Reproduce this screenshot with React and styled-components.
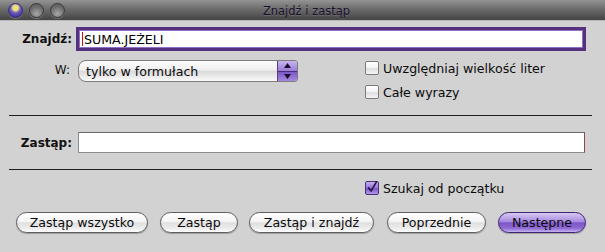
import React from "react";
import styled, { createGlobalStyle } from "styled-components";

const Global = createGlobalStyle`
  html, body { margin: 0; padding: 0; background: #d2d2d2; }
  body { font-family: "DejaVu Sans", "Liberation Sans", sans-serif; font-size: 12.6px; color: #111; }
  * { box-sizing: border-box; }
`;

const Window = styled.div`
  width: 605px;
  height: 252px;
  background: #d2d2d2;
  display: flex;
  flex-direction: column;
  overflow: hidden;
`;

const TitleBar = styled.div`
  height: 21px;
  flex: none;
  display: grid;
  grid-template-columns: 1fr auto 1fr;
  align-items: center;
  background: linear-gradient(#939393 0%, #6c6c6c 45%, #444 100%);
  border-bottom: 1px solid #b8b8b8;
  padding-left: 8px;
`;

const Lights = styled.div`
  display: flex;
  gap: 6px;
  align-items: center;
`;

const Light = styled.span`
  width: 15px;
  height: 15px;
  border-radius: 50%;
  border: 1px solid ${p => (p.$close ? "#3a2c7a" : "#3a3a3a")};
  background: ${p =>
    p.$close
      ? "radial-gradient(circle at 50% 30%, #f0e27a 0 22%, #6c5cc0 45%, #2d2380 100%)"
      : "radial-gradient(circle at 50% 75%, #a8a8a8 0%, #707070 55%, #555 100%)"};
  box-shadow: 0 1px 0 rgba(255,255,255,0.25);
`;

const Title = styled.div`
  font-size: 11.5px;
  color: #1b1030;
  text-shadow: 0 1px 0 rgba(255,255,255,0.15);
  padding-top: 1px;
`;

const Body = styled.div`
  display: flex;
  flex-direction: column;
`;

const Row = styled.div`
  display: flex;
  align-items: ${p => p.$align || "center"};
  margin-top: ${p => p.$mt || 0}px;
`;

const Label = styled.div`
  width: 72px;
  flex: none;
  text-align: right;
  font-size: 12px;
  font-weight: ${p => (p.$bold ? 700 : 400)};
  padding-right: ${p => p.$pr || 0}px;
  margin-top: ${p => p.$mt || 0}px;
`;

const FocusField = styled.div`
  margin-left: 4px;
  width: 510px;
  height: 24px;
  border: 3px solid #54307f;
  box-shadow: inset 0 0 0 1px #8e6fc4;
  background: #fff;
  display: flex;
  align-items: center;
  padding-left: 3px;
  color: #000;
`;

const Caret = styled.span`
  width: 1px;
  height: 14px;
  background: #d01010;
  margin-right: 1px;
`;

const TextField = styled.div`
  margin-left: 6px;
  width: 507px;
  height: 21px;
  background: #fff;
  border: 1px solid #8c8c8c;
  border-top-color: #6a6a6a;
  border-right-color: #8a4a4a;
`;

const Select = styled.div`
  margin-left: 6px;
  width: 220px;
  height: 22px;
  display: flex;
  border: 1px solid #7c7c7c;
  border-radius: 8px 3px 3px 8px;
  overflow: hidden;
  background: linear-gradient(#fdfdfd 0%, #efefef 45%, #dadada 52%, #ececec 80%, #fafafa 100%);
`;

const SelectText = styled.div`
  flex: 1;
  display: flex;
  align-items: center;
  padding-left: 7px;
  color: #0c0c0c;
`;

const Stepper = styled.div`
  width: 20px;
  display: flex;
  flex-direction: column;
  border-left: 1px solid #5a3d8a;
`;

const StepHalf = styled.div`
  flex: 1;
  display: flex;
  align-items: center;
  justify-content: center;
  background: ${p =>
    p.$up
      ? "linear-gradient(#c8b5ee, #9a7bd6)"
      : "linear-gradient(#7c56c6, #a68ae0)"};
  border-top: ${p => (p.$up ? "none" : "1px solid #4b2c7e")};
`;

const Options = styled.div`
  margin-left: ${p => p.$ml}px;
  margin-top: ${p => p.$mt || 0}px;
  display: flex;
  flex-direction: column;
  gap: 10px;
`;

const CheckRow = styled.label`
  display: flex;
  align-items: center;
  gap: 4px;
  color: #0a0a0a;
  height: 14px;
`;

const Box = styled.span`
  width: 14px;
  height: 14px;
  flex: none;
  border: 1px solid ${p => (p.$checked ? "#4a2f78" : "#7a7a7a")};
  border-radius: 2px;
  background: ${p =>
    p.$checked
      ? "linear-gradient(#c3b0ec 0%, #9676d8 50%, #7a54c6 55%, #b39be6 100%)"
      : "linear-gradient(#ffffff 0%, #f2f2f2 50%, #dedede 55%, #f6f6f6 100%)"};
  display: flex;
  align-items: center;
  justify-content: center;
  overflow: visible;
`;

const Separator = styled.div`
  height: 1px;
  background: #1e1e1e;
  margin: ${p => p.$mt || 0}px 13px 0 9px;
`;

const Buttons = styled.div`
  display: flex;
  margin-top: 17px;
  padding-left: 16px;
`;

const Button = styled.button`
  width: ${p => p.$w}px;
  margin-left: ${p => p.$ml || 0}px;
  height: 21px;
  border-radius: 11px;
  border: 1px solid ${p => (p.$primary ? "#3d2470" : "#5e5e5e")};
  font-family: "DejaVu Sans", "Liberation Sans", sans-serif;
  font-size: 12.6px;
  color: #0b0b0b;
  padding: 0;
  background: ${p =>
    p.$primary
      ? "linear-gradient(#d6c8f2 0%, #a88be0 45%, #7c56c8 52%, #8e6ad2 80%, #c5b2f0 100%)"
      : "linear-gradient(#ffffff 0%, #f4f4f4 45%, #e0e0e0 52%, #ececec 80%, #ffffff 100%)"};
  box-shadow: 0 1px 1px rgba(0,0,0,0.25);
`;

const buttons = [
  { t: "Zastąp wszystko", w: 132, ml: 0 },
  { t: "Zastąp", w: 78, ml: 12 },
  { t: "Zastąp i znajdź", w: 125, ml: 11 },
  { t: "Poprzednie", w: 99, ml: 13 },
  { t: "Następne", w: 88, ml: 12, primary: true },
];

const Check = () => (
  <svg width="14" height="16" viewBox="0 0 14 16" style={{ marginTop: -3 }}>
    <path d="M2.5 8.5 L6 12.5 L12.5 1.5" fill="none" stroke="#2a1450" strokeWidth="2" />
  </svg>
);

const Arrow = ({ up }) => (
  <svg width="7" height="5" viewBox="0 0 7 5">
    <path d={up ? "M0 5 L3.5 0 L7 5 Z" : "M0 0 L3.5 5 L7 0 Z"} fill="#1a0c30" />
  </svg>
);

export default function App() {
  return (
    <>
      <Global />
      <Window>
        <TitleBar>
          <Lights>
            <Light $close />
            <Light />
            <Light />
          </Lights>
          <Title>Znajdź i zastąp</Title>
          <div />
        </TitleBar>
        <Body>
          <Row $mt={6}>
            <Label $bold>Znajdź:</Label>
            <FocusField>
              <Caret />
              SUMA.JEŻELI
            </FocusField>
          </Row>
          <Row $mt={9} $align="flex-start">
            <Label $pr={2} $mt={3}>W:</Label>
            <Select>
              <SelectText>tylko w formułach</SelectText>
              <Stepper>
                <StepHalf $up><Arrow up /></StepHalf>
                <StepHalf><Arrow /></StepHalf>
              </Stepper>
            </Select>
            <Options $ml={67} $mt={1}>
              <CheckRow><Box />Uwzględniaj wielkość liter</CheckRow>
              <CheckRow><Box />Całe wyrazy</CheckRow>
            </Options>
          </Row>
          <Separator $mt={16} />
          <Row $mt={16}>
            <Label $bold>Zastąp:</Label>
            <TextField />
          </Row>
          <Separator $mt={16} />
          <Row $mt={11}>
            <Options $ml={365}>
              <CheckRow><Box $checked><Check /></Box>Szukaj od początku</CheckRow>
            </Options>
          </Row>
          <Buttons>
            {buttons.map(b => (
              <Button key={b.t} $w={b.w} $ml={b.ml} $primary={b.primary}>{b.t}</Button>
            ))}
          </Buttons>
        </Body>
      </Window>
    </>
  );
}
